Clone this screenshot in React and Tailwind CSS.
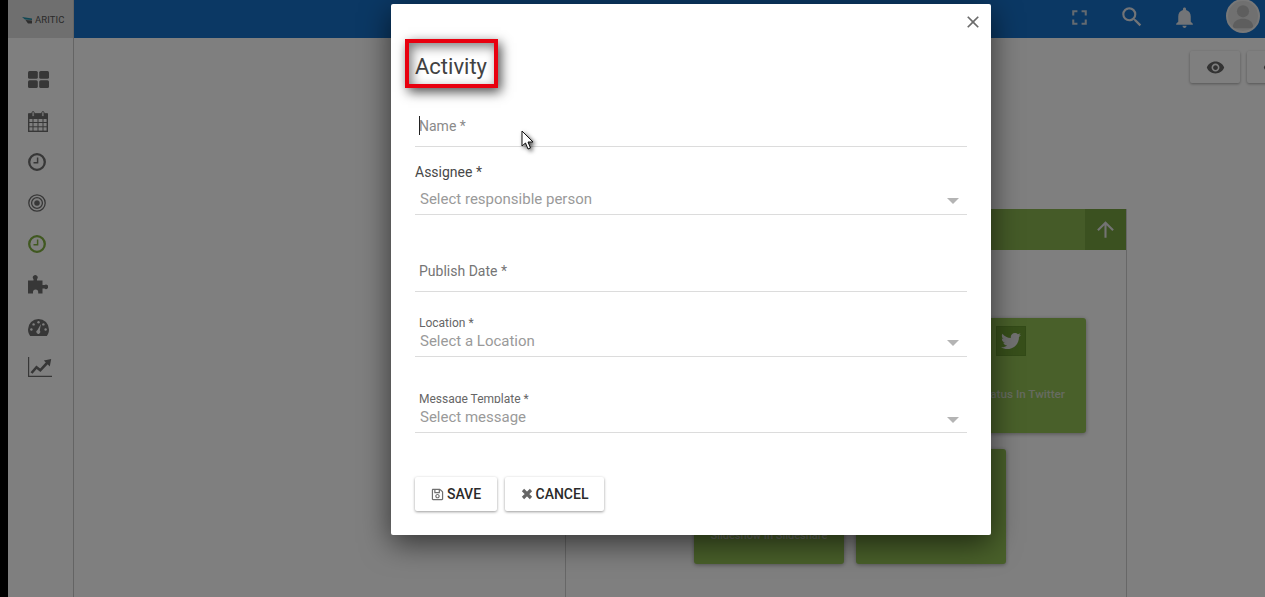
import React from "react";
import { FaTwitter, FaRegSave } from "react-icons/fa";
import { MdFullscreen, MdSearch, MdNotifications, MdVisibility, MdArrowUpward, MdClose } from "react-icons/md";

const font = { fontFamily: "Roboto, sans-serif" };

function GridIcon({ className }) {
  return (
    <svg viewBox="0 0 21 17" className={className} fill="currentColor">
      <rect x="0" y="0" width="9.8" height="7.8" rx="1.5" />
      <rect x="11.2" y="0" width="9.8" height="7.8" rx="1.5" />
      <rect x="0" y="9.2" width="9.8" height="7.8" rx="1.5" />
      <rect x="11.2" y="9.2" width="9.8" height="7.8" rx="1.5" />
    </svg>
  );
}

function CalendarIcon({ className }) {
  return (
    <svg viewBox="0 0 20 21" className={className} fill="none" stroke="currentColor">
      <path d="M1 3 H19 V7.5 H1 Z" fill="currentColor" strokeWidth="1" />
      <rect x="0.7" y="3" width="18.6" height="17.3" strokeWidth="1.4" />
      <path d="M5 8 V20 M10 8 V20 M15 8 V20 M1 11.5 H19 M1 15.8 H19" strokeWidth="1" />
      <rect x="4" y="0.6" width="2.2" height="5" rx="1" fill="#fff" strokeWidth="1" />
      <rect x="13.8" y="0.6" width="2.2" height="5" rx="1" fill="#fff" strokeWidth="1" />
    </svg>
  );
}

function ClockIcon({ className }) {
  return (
    <svg viewBox="0 0 18 18" className={className} fill="none" stroke="currentColor">
      <circle cx="9" cy="9" r="7.8" strokeWidth="2.3" />
      <path d="M9.6 4.5 V9.8 H5.5" strokeWidth="1.5" />
    </svg>
  );
}

function TargetIcon({ className }) {
  return (
    <svg viewBox="0 0 18 18" className={className} fill="none" stroke="currentColor">
      <circle cx="9" cy="9" r="8.2" strokeWidth="1.3" />
      <circle cx="9" cy="9" r="5.4" strokeWidth="1.3" />
      <circle cx="9" cy="9" r="2.6" fill="currentColor" strokeWidth="0.4" />
    </svg>
  );
}

function PuzzleIcon({ className }) {
  return (
    <svg viewBox="0 0 20 20" className={className} fill="currentColor">
      <path d="M0 5.5 H5.5 V4.2 A2.4 2.4 0 1 1 9 4.2 V5.5 H14.5 V10 H16.5 A2.3 2.3 0 1 1 16.5 13.6 H14.5 V18.5 H10.2 V17 A2.6 2.6 0 0 0 5 17 V18.5 H0 Z" />
    </svg>
  );
}

function GaugeIcon({ className }) {
  return (
    <svg viewBox="0 0 21 17" className={className}>
      <path d="M0 10.5 A10.5 10.5 0 0 1 21 10.5 C21 13 20.2 15.3 18.8 17 H2.2 C0.8 15.3 0 13 0 10.5 Z" fill="currentColor" />
      <g fill="#fff">
        <circle cx="3.4" cy="10.5" r="1.2" />
        <circle cx="5.6" cy="5.4" r="1.2" />
        <circle cx="10.5" cy="3.2" r="1.2" />
        <circle cx="15.4" cy="5.4" r="1.2" />
        <circle cx="17.6" cy="10.5" r="1.2" />
        <path d="M12.9 5 L11.8 11.5 A2 2 0 1 1 9.5 11 Z" />
      </g>
    </svg>
  );
}

function ChartIcon({ className }) {
  return (
    <svg viewBox="0 0 24 20" className={className} fill="none" stroke="currentColor">
      <path d="M0.6 0 V19.3 H24" strokeWidth="1.2" />
      <path d="M3.5 16 L8.5 10.2 L12.3 13.3 L19.5 5.5" strokeWidth="2.6" />
      <path d="M15.8 3.5 L23.2 2 L21.8 9.5 Z" fill="currentColor" stroke="none" />
    </svg>
  );
}

function Caret({ className }) {
  return <span className={`ml-auto mr-[8px] w-0 h-0 border-x-[6px] border-x-transparent border-t-[6px] border-t-[#b4b4b4] ${className}`} />;
}

function Card({ className, children }) {
  return <div className={`bg-[#92c054] rounded-[3px] shadow-[0_1px_4px_rgba(0,0,0,0.35)] relative ${className}`}>{children}</div>;
}

export default function App() {
  return (
    <div className="relative w-[1265px] h-[597px] overflow-hidden flex bg-black" style={font}>
      <div className="w-2 shrink-0 bg-black" />
      <aside className="w-[66px] shrink-0 bg-white border-r border-[#c8c8c8] flex flex-col">
        <div className="h-[38px] pt-[2px] bg-[#dedede] flex items-center gap-[3px] pl-[14px]">
          <svg viewBox="0 0 10 7" className="w-[10px] h-[7px]"><path d="M0 0 L10 1.5 L10 3 L3 2.5 Z" fill="#1f8fa8" /><path d="M3.5 3 L10 3.6 L10 6.5 L6 6.5 Z" fill="#5a5a5a" /></svg>
          <span className="text-[9.5px] leading-none text-[#555] tracking-[0.1px]">ARITIC</span>
        </div>
        <div className="flex flex-col items-start pl-[20px] pt-[33px] text-[#6e6e6e]">
          <GridIcon className="w-[21px] h-[17px]" />
          <CalendarIcon className="w-[20px] h-[21px] mt-[23px]" />
          <ClockIcon className="w-[18px] h-[18px] mt-[21px]" />
          <TargetIcon className="w-[18px] h-[18px] mt-[23px]" />
          <ClockIcon className="w-[18px] h-[18px] mt-[23px] text-[#80b040]" />
          <PuzzleIcon className="w-[20px] h-[20px] mt-[22px]" />
          <GaugeIcon className="w-[21px] h-[17px] mt-[24px]" />
          <ChartIcon className="w-[24px] h-[20px] mt-[21px]" />
        </div>
      </aside>
      <main className="flex-1 flex flex-col bg-white min-w-0">
        <header className="h-[38px] pb-[4px] bg-[#1670c8] flex items-center justify-end text-[#e4e8ee] shrink-0">
          <MdFullscreen className="w-[25px] h-[25px] mr-[27px] text-[#c8d4e0]" />
          <MdSearch className="w-[26px] h-[26px] mr-[27px]" />
          <MdNotifications className="w-[25px] h-[25px] mr-[29px]" />
          <div className="w-[34px] h-[34px] -mt-[3px] rounded-full bg-[#e0e0e0] border-2 border-[#f0f0f0] mr-[5px] overflow-hidden flex items-end justify-center shrink-0">
            <svg viewBox="0 0 32 32" className="w-[30px] h-[30px] shrink-0"><circle cx="16" cy="11" r="6.5" fill="#bdbdbd" /><path d="M5 29 C5 21 11 19 16 19 C21 19 27 21 27 29 Z" fill="#bdbdbd" /></svg>
          </div>
        </header>
        <div className="flex-1 flex flex-col min-h-0">
          <div className="flex justify-end gap-[7px] pt-[13px] -mr-[32px]">
            <div className="w-[50px] h-[32px] rounded-[2px] bg-white shadow-[0_1px_3px_rgba(0,0,0,0.35)] flex items-center justify-center text-[#666]"><MdVisibility className="w-[19px] h-[19px]" /></div>
            <div className="w-[50px] h-[32px] rounded-[2px] bg-white shadow-[0_1px_3px_rgba(0,0,0,0.35)] flex items-center justify-center text-[#666]"><MdVisibility className="w-[19px] h-[19px]" /></div>
          </div>
          <section className="ml-[491px] w-[562px] flex-1 mt-[126px] border-x border-[#cfcfcf] flex flex-col">
            <div className="h-[41px] bg-[#8ab650] flex justify-end shrink-0">
              <div className="w-[41px] bg-[#76a240] flex items-center justify-center text-[#e6e6e6]"><MdArrowUpward className="w-[25px] h-[25px]" /></div>
            </div>
            <div className="pt-[68px] pl-[128px] flex flex-col">
              <div className="flex justify-end pr-[40px]">
                <Card className="w-[300px] h-[115px] pl-[210px] pt-[8px]">
                  <div className="w-[30px] h-[30px] bg-[#6e9e34] border border-[#669630] flex items-center justify-center text-[#e4e4e4]"><FaTwitter className="w-[20px] h-[20px]" /></div>
                  <div className="absolute right-[21px] top-[69px] text-[11.7px] leading-[14px] font-medium text-[#ccd6c0] whitespace-nowrap">Update Status In Twitter</div>
                </Card>
              </div>
              <div className="flex gap-[12px] mt-[16px]">
                <Card className="w-[150px] h-[115px]">
                  <div className="absolute inset-x-0 top-[80px] text-center text-[11px] leading-[14px] font-medium text-[#ccd6c0] whitespace-nowrap">Slideshow In Slideshare</div>
                </Card>
                <Card className="w-[150px] h-[115px]" />
              </div>
            </div>
          </section>
        </div>
      </main>

      <div className="absolute inset-0 bg-black/50" />

      <div className="absolute left-[391px] top-[4px] w-[600px] bg-white rounded-[2px] px-[24px] pb-[24px] pt-[47px] shadow-[0_8px_30px_rgba(0,0,0,0.6)]">
        <button className="absolute right-[8px] top-[8px] text-[#6b6b6b]"><MdClose className="w-[20px] h-[20px]" /></button>

        <h2 className="text-[22px] leading-[32px] font-normal text-[#424242]">Activity</h2>
        <div className="absolute left-[14px] top-[35px] w-[93px] h-[49px] border-[4px] border-[#e8000f] shadow-[3px_4px_11px_rgba(0,0,0,0.7),inset_3px_4px_11px_rgba(0,0,0,0.5)]" />

        <div className="mt-[24px] h-[40px] border-b border-[#dcdcdc] flex items-center relative text-[14px] text-[#8a8a8a] pl-[4px]">
          <span className="absolute left-[4px] top-[9px] w-px h-[19px] bg-[#222]" />
          Name *
        </div>

        <div className="mt-[15px] h-[20px] leading-[20px] text-[14px] text-[#484848]">Assignee *</div>
        <div className="h-[33px] pt-px border-b border-[#dcdcdc] flex items-start leading-[32px] pl-[5px] text-[15px] text-[#9a9a9a]">
          Select responsible person
          <Caret className="mt-[15px]" />
        </div>

        <div className="mt-[37px] h-[40px] border-b border-[#dcdcdc] flex items-center text-[14px] text-[#757575] pl-[4px]">Publish Date *</div>

        <div className="mt-[23px] h-[16px] leading-[16px] text-[12px] text-[#666] pl-[4px]">Location *</div>
        <div className="h-[26px] border-b border-[#dcdcdc] flex items-start leading-[20px] pl-[5px] text-[15px] text-[#9a9a9a]">
          Select a Location
          <Caret className="mt-[9px]" />
        </div>

        <div className="mt-[34px] h-[12px] overflow-hidden leading-[16px] text-[12px] text-[#666] pl-[4px]">Message Template *</div>
        <div className="mt-[4px] h-[26px] border-b border-[#dcdcdc] flex items-start leading-[20px] pl-[5px] text-[15px] text-[#9a9a9a]">
          Select message
          <Caret className="mt-[10px]" />
        </div>

        <div className="mt-[44px] flex gap-[8px]">
          <button className="w-[82px] h-[34px] bg-white rounded-[2px] shadow-[0_1px_3px_rgba(0,0,0,0.4)] flex items-center justify-center gap-[3px] text-[14px] font-medium text-[#2a2a2a]">
            <FaRegSave className="w-[13px] h-[13px] text-[#707070]" />SAVE
          </button>
          <button className="w-[99px] h-[34px] bg-white rounded-[2px] shadow-[0_1px_3px_rgba(0,0,0,0.4)] flex items-center justify-center gap-[3px] text-[14px] font-medium text-[#2a2a2a]">
            <svg viewBox="0 0 12 12" className="w-[12px] h-[12px]" stroke="#666" strokeWidth="3.2"><path d="M2 2 L10 10 M10 2 L2 10" /></svg>CANCEL
          </button>
        </div>

        <svg viewBox="0 0 14 22" className="absolute left-[130px] top-[126px] w-[14px] h-[22px]" style={{ filter: "drop-shadow(2px 2px 2px rgba(0,0,0,0.7))" }}>
          <path d="M1 1 L1 16 L4.5 13 L7 19 L9.5 18 L7 12 L12 12 Z" fill="#fff" stroke="#111" strokeWidth="1" />
        </svg>
      </div>
    </div>
  );
}
